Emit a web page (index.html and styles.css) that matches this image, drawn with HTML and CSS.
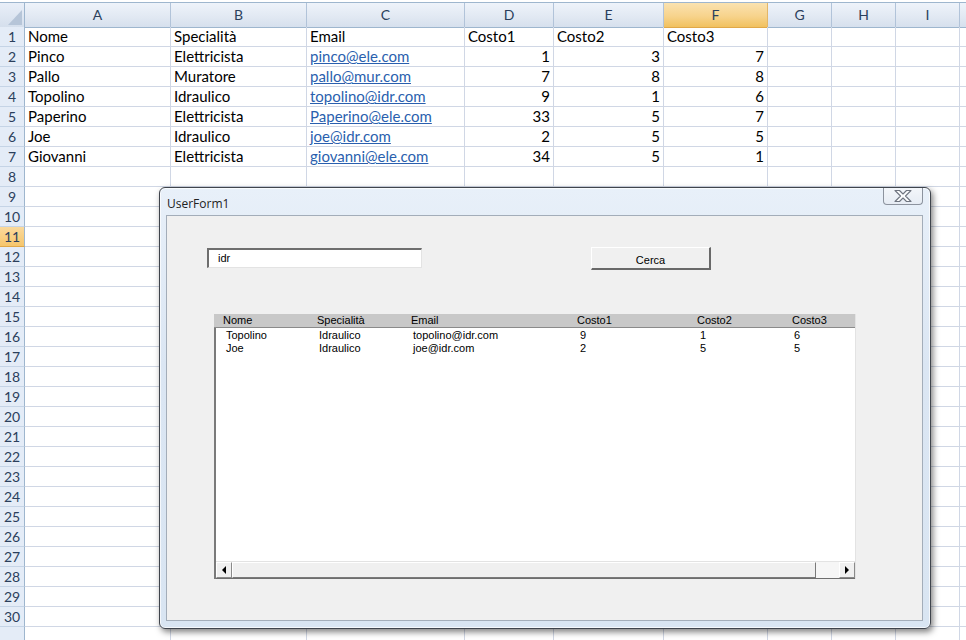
FILE: index.html
```html
<!DOCTYPE html>
<html>
<head>
<meta charset="utf-8">
<title>UserForm1</title>
<link rel="stylesheet" href="styles.css">
</head>
<body>
<div class="sheet">
  <div class="hdr">
    <div class="corner"><svg width="24" height="24" viewBox="0 0 24 24"><polygon points="22,7 22,22 8,22" fill="#b6c5d8"/></svg></div>
    <div class="ch">A</div><div class="ch">B</div><div class="ch">C</div><div class="ch">D</div><div class="ch">E</div><div class="ch sel">F</div><div class="ch">G</div><div class="ch">H</div><div class="ch">I</div><div class="ch end"></div>
  </div>
  <div class="row"><div class="rh">1</div><span>Nome</span><span>Specialità</span><span>Email</span><span>Costo1</span><span>Costo2</span><span>Costo3</span><span></span><span></span><span></span><span></span></div>
  <div class="row"><div class="rh">2</div><span>Pinco</span><span>Elettricista</span><span><a>pinco@ele.com</a></span><span class="n">1</span><span class="n">3</span><span class="n">7</span><span></span><span></span><span></span><span></span></div>
  <div class="row"><div class="rh">3</div><span>Pallo</span><span>Muratore</span><span><a>pallo@mur.com</a></span><span class="n">7</span><span class="n">8</span><span class="n">8</span><span></span><span></span><span></span><span></span></div>
  <div class="row"><div class="rh">4</div><span>Topolino</span><span>Idraulico</span><span><a>topolino@idr.com</a></span><span class="n">9</span><span class="n">1</span><span class="n">6</span><span></span><span></span><span></span><span></span></div>
  <div class="row"><div class="rh">5</div><span>Paperino</span><span>Elettricista</span><span><a>Paperino@ele.com</a></span><span class="n">33</span><span class="n">5</span><span class="n">7</span><span></span><span></span><span></span><span></span></div>
  <div class="row"><div class="rh">6</div><span>Joe</span><span>Idraulico</span><span><a>joe@idr.com</a></span><span class="n">2</span><span class="n">5</span><span class="n">5</span><span></span><span></span><span></span><span></span></div>
  <div class="row"><div class="rh">7</div><span>Giovanni</span><span>Elettricista</span><span><a>giovanni@ele.com</a></span><span class="n">34</span><span class="n">5</span><span class="n">1</span><span></span><span></span><span></span><span></span></div>
  <div class="row"><div class="rh">8</div><span></span><span></span><span></span><span></span><span></span><span></span><span></span><span></span><span></span><span></span></div>
  <div class="row"><div class="rh">9</div><span></span><span></span><span></span><span></span><span></span><span></span><span></span><span></span><span></span><span></span></div>
  <div class="row"><div class="rh">10</div><span></span><span></span><span></span><span></span><span></span><span></span><span></span><span></span><span></span><span></span></div>
  <div class="row"><div class="rh sel">11</div><span></span><span></span><span></span><span></span><span></span><span></span><span></span><span></span><span></span><span></span></div>
  <div class="row"><div class="rh">12</div><span></span><span></span><span></span><span></span><span></span><span></span><span></span><span></span><span></span><span></span></div>
  <div class="row"><div class="rh">13</div><span></span><span></span><span></span><span></span><span></span><span></span><span></span><span></span><span></span><span></span></div>
  <div class="row"><div class="rh">14</div><span></span><span></span><span></span><span></span><span></span><span></span><span></span><span></span><span></span><span></span></div>
  <div class="row"><div class="rh">15</div><span></span><span></span><span></span><span></span><span></span><span></span><span></span><span></span><span></span><span></span></div>
  <div class="row"><div class="rh">16</div><span></span><span></span><span></span><span></span><span></span><span></span><span></span><span></span><span></span><span></span></div>
  <div class="row"><div class="rh">17</div><span></span><span></span><span></span><span></span><span></span><span></span><span></span><span></span><span></span><span></span></div>
  <div class="row"><div class="rh">18</div><span></span><span></span><span></span><span></span><span></span><span></span><span></span><span></span><span></span><span></span></div>
  <div class="row"><div class="rh">19</div><span></span><span></span><span></span><span></span><span></span><span></span><span></span><span></span><span></span><span></span></div>
  <div class="row"><div class="rh">20</div><span></span><span></span><span></span><span></span><span></span><span></span><span></span><span></span><span></span><span></span></div>
  <div class="row"><div class="rh">21</div><span></span><span></span><span></span><span></span><span></span><span></span><span></span><span></span><span></span><span></span></div>
  <div class="row"><div class="rh">22</div><span></span><span></span><span></span><span></span><span></span><span></span><span></span><span></span><span></span><span></span></div>
  <div class="row"><div class="rh">23</div><span></span><span></span><span></span><span></span><span></span><span></span><span></span><span></span><span></span><span></span></div>
  <div class="row"><div class="rh">24</div><span></span><span></span><span></span><span></span><span></span><span></span><span></span><span></span><span></span><span></span></div>
  <div class="row"><div class="rh">25</div><span></span><span></span><span></span><span></span><span></span><span></span><span></span><span></span><span></span><span></span></div>
  <div class="row"><div class="rh">26</div><span></span><span></span><span></span><span></span><span></span><span></span><span></span><span></span><span></span><span></span></div>
  <div class="row"><div class="rh">27</div><span></span><span></span><span></span><span></span><span></span><span></span><span></span><span></span><span></span><span></span></div>
  <div class="row"><div class="rh">28</div><span></span><span></span><span></span><span></span><span></span><span></span><span></span><span></span><span></span><span></span></div>
  <div class="row"><div class="rh">29</div><span></span><span></span><span></span><span></span><span></span><span></span><span></span><span></span><span></span><span></span></div>
  <div class="row"><div class="rh">30</div><span></span><span></span><span></span><span></span><span></span><span></span><span></span><span></span><span></span><span></span></div>
  <div class="row"><div class="rh"></div><span></span><span></span><span></span><span></span><span></span><span></span><span></span><span></span><span></span><span></span></div>

  <div class="dialog">
    <div class="titlebar">
      <span class="title">UserForm1</span>
      <div class="close">
        <svg width="20" height="14" viewBox="0 0 20 14"><polygon points="2,1.5 6.5,1.5 10,5 13.5,1.5 18,1.5 12.5,7 18,12.5 13.5,12.5 10,9 6.5,12.5 2,12.5 7.5,7" fill="#fbfcfd" stroke="#6f7580" stroke-width="1.1" stroke-linejoin="round"/></svg>
      </div>
    </div>
    <div class="client">
      <div class="toprow">
        <div class="textbox">idr</div>
        <div class="button">Cerca</div>
      </div>
      <div class="listbox">
        <div class="lhead"><span>Nome</span><span>Specialità</span><span>Email</span><span>Costo1</span><span>Costo2</span><span>Costo3</span></div>
        <div class="lrow"><span>Topolino</span><span>Idraulico</span><span>topolino@idr.com</span><span>9</span><span>1</span><span>6</span></div>
        <div class="lrow"><span>Joe</span><span>Idraulico</span><span>joe@idr.com</span><span>2</span><span>5</span><span>5</span></div>
        <div class="lspace"></div>
        <div class="hscroll">
          <div class="sbtn"><svg width="6" height="8" viewBox="0 0 6 8"><polygon points="5,0 5,8 1,4" fill="#000"/></svg></div>
          <div class="thumb"></div>
          <div class="track"></div>
          <div class="sbtn"><svg width="6" height="8" viewBox="0 0 6 8"><polygon points="1,0 1,8 5,4" fill="#000"/></svg></div>
        </div>
      </div>
    </div>
  </div>
</div>
</body>
</html>
```

FILE: styles.css
```css
html, body {
  margin: 0;
  padding: 0;
  background: #ffffff;
}

.sheet {
  position: relative;
  width: 966px;
  height: 640px;
  overflow: hidden;
  padding-top: 2px;
  box-sizing: border-box;
  font-family: Lato, "Liberation Sans", sans-serif;
  font-size: 15px;
  color: #000;
}

.hdr,
.row {
  display: grid;
  grid-template-columns: 25px 146px 136px 158px 89px 110px 104px 64px 64px 64px 6px;
}

.hdr {
  height: 25px;
  border-top: 1px solid #9eb6ce;
  box-sizing: border-box;
}

.corner {
  background: linear-gradient(#e9eff8, #d5dfec);
  border-right: 1px solid #9eb6ce;
  border-bottom: 1px solid #9eb6ce;
  display: flex;
}

.corner svg {
  display: block;
}

.ch {
  background: linear-gradient(#eef3fa 0%, #e2e9f3 55%, #d6e0ed 100%);
  border-right: 1px solid #b1c3d9;
  border-bottom: 1px solid #9eb6ce;
  text-align: center;
  line-height: 23px;
  color: #2b3f5c;
  font-size: 14px;
}

.ch.sel {
  background: linear-gradient(#fae2b0 0%, #f7d38c 55%, #f1c15f 100%);
  border-bottom-color: #e0a848;
  border-right-color: #e3b668;
}

.ch.end {
  border-right: none;
}

.row {
  height: 20px;
}

.row > span {
  border-right: 1px solid #d0d7e5;
  border-bottom: 1px solid #d0d7e5;
  padding: 0 3px;
  line-height: 19px;
  white-space: nowrap;
  overflow: hidden;
}

.row > span:last-child {
  border-right: none;
}

.row > span.n {
  text-align: right;
}

.row a {
  color: #2a5fae;
  text-decoration: underline;
}

.rh {
  background: #e4ecf7;
  border-right: 1px solid #9eb6ce;
  border-bottom: 1px solid #c5d4e6;
  text-align: center;
  line-height: 19px;
  color: #2b3f5c;
  font-size: 14px;
}

.rh.sel {
  background: linear-gradient(#fad99c, #f6c66c);
  border-bottom-color: #e0a848;
}

/* ---------- UserForm dialog ---------- */
.dialog {
  position: absolute;
  left: 159px;
  top: 187px;
  width: 772px;
  height: 442px;
  box-sizing: border-box;
  border: 1px solid #3f444c;
  border-radius: 6px;
  background: linear-gradient(180deg, #e8f0f9 0%, #dbe6f3 40%, #d9e5f2 100%);
  box-shadow: 2px 3px 6px rgba(0, 0, 0, 0.5), inset 0 0 0 1px rgba(255, 255, 255, 0.7);
  padding: 0 7px 7px 6px;
  display: flex;
  flex-direction: column;
  font-family: "Liberation Sans", Arial, sans-serif;
  font-size: 11px;
}

.titlebar {
  height: 27px;
  display: flex;
  justify-content: space-between;
  align-items: flex-start;
  padding-left: 1px;
}

.title {
  font-family: "Open Sans", "Noto Sans", sans-serif;
  font-size: 12px;
  color: #222;
  padding-top: 7px;
}

.close {
  width: 40px;
  height: 17px;
  box-sizing: border-box;
  border: 1px solid #8c939e;
  border-top: none;
  border-radius: 0 0 4px 4px;
  background: linear-gradient(#f3f6fa, #e6ecf4);
  display: flex;
  align-items: center;
  justify-content: center;
}

.close svg {
  display: block;
}

.client {
  flex: 1;
  background: #f0f0f0;
  border: 1px solid #a3adb9;
}

.toprow {
  display: flex;
  align-items: flex-start;
  padding: 31px 0 0 40px;
}

.textbox {
  margin-top: 1px;
  width: 215px;
  height: 20px;
  box-sizing: border-box;
  background: #fff;
  border-top: 2px solid #6e6e6e;
  border-left: 2px solid #6e6e6e;
  border-right: 1px solid #e3e3e3;
  border-bottom: 1px solid #e3e3e3;
  padding-left: 9px;
  line-height: 17px;
  color: #000;
}

.button {
  margin-left: 169px;
  width: 120px;
  height: 23px;
  box-sizing: border-box;
  background: #f0f0f0;
  border-top: 1px solid #ffffff;
  border-left: 1px solid #ffffff;
  border-right: 2px solid #696969;
  border-bottom: 2px solid #696969;
  text-align: center;
  line-height: 24px;
  color: #000;
}

.listbox {
  margin: 44px 0 0 47px;
  width: 642px;
  height: 265px;
  box-sizing: border-box;
  background: #fff;
  border-left: 2px solid #7a7a7a;
  border-right: 1px solid #e3e3e3;
  display: flex;
  flex-direction: column;
}

.lhead,
.lrow {
  display: grid;
  grid-template-columns: 94px 94px 166px 120px 95px 1fr;
  height: 13px;
  line-height: 13px;
  color: #000;
  white-space: nowrap;
}

.lhead {
  margin-left: -2px;
  padding-left: 9px;
  background: #c8c8c8;
  border-bottom: 1px solid #8a8a8a;
  height: 14px;
  box-sizing: border-box;
}

.lrow {
  padding-left: 8px;
  padding-top: 1px;
}

.lrow + .lrow {
  padding-top: 0;
}

.lrow span {
  padding-left: 1px;
}

.lrow span:first-child {
  padding-left: 2px;
}

.lrow span:nth-child(4),
.lrow span:nth-child(5) {
  padding-left: 2px;
}

.lspace {
  flex: 1;
}

.hscroll {
  height: 16px;
  display: flex;
  border-top: 1px solid #e3e3e3;
  border-bottom: 1px solid #6e6e6e;
}

.sbtn {
  width: 16px;
  box-sizing: border-box;
  background: #f0f0f0;
  border-left: 1px solid #fff;
  border-top: 1px solid #fff;
  border-right: 1px solid #8a8a8a;
  border-bottom: 1px solid #8a8a8a;
  display: flex;
  align-items: center;
  justify-content: center;
}

.sbtn svg {
  display: block;
}

.thumb {
  flex: 1;
  box-sizing: border-box;
  background: #f0f0f0;
  border-left: 1px solid #fff;
  border-top: 1px solid #fff;
  border-right: 1px solid #7a7a7a;
  border-bottom: 1px solid #7a7a7a;
}

.track {
  width: 23px;
  background-color: #f6f6f6;
  background-image: radial-gradient(#e6e6e6 0.6px, transparent 0.7px);
  background-size: 2px 2px;
}
```
